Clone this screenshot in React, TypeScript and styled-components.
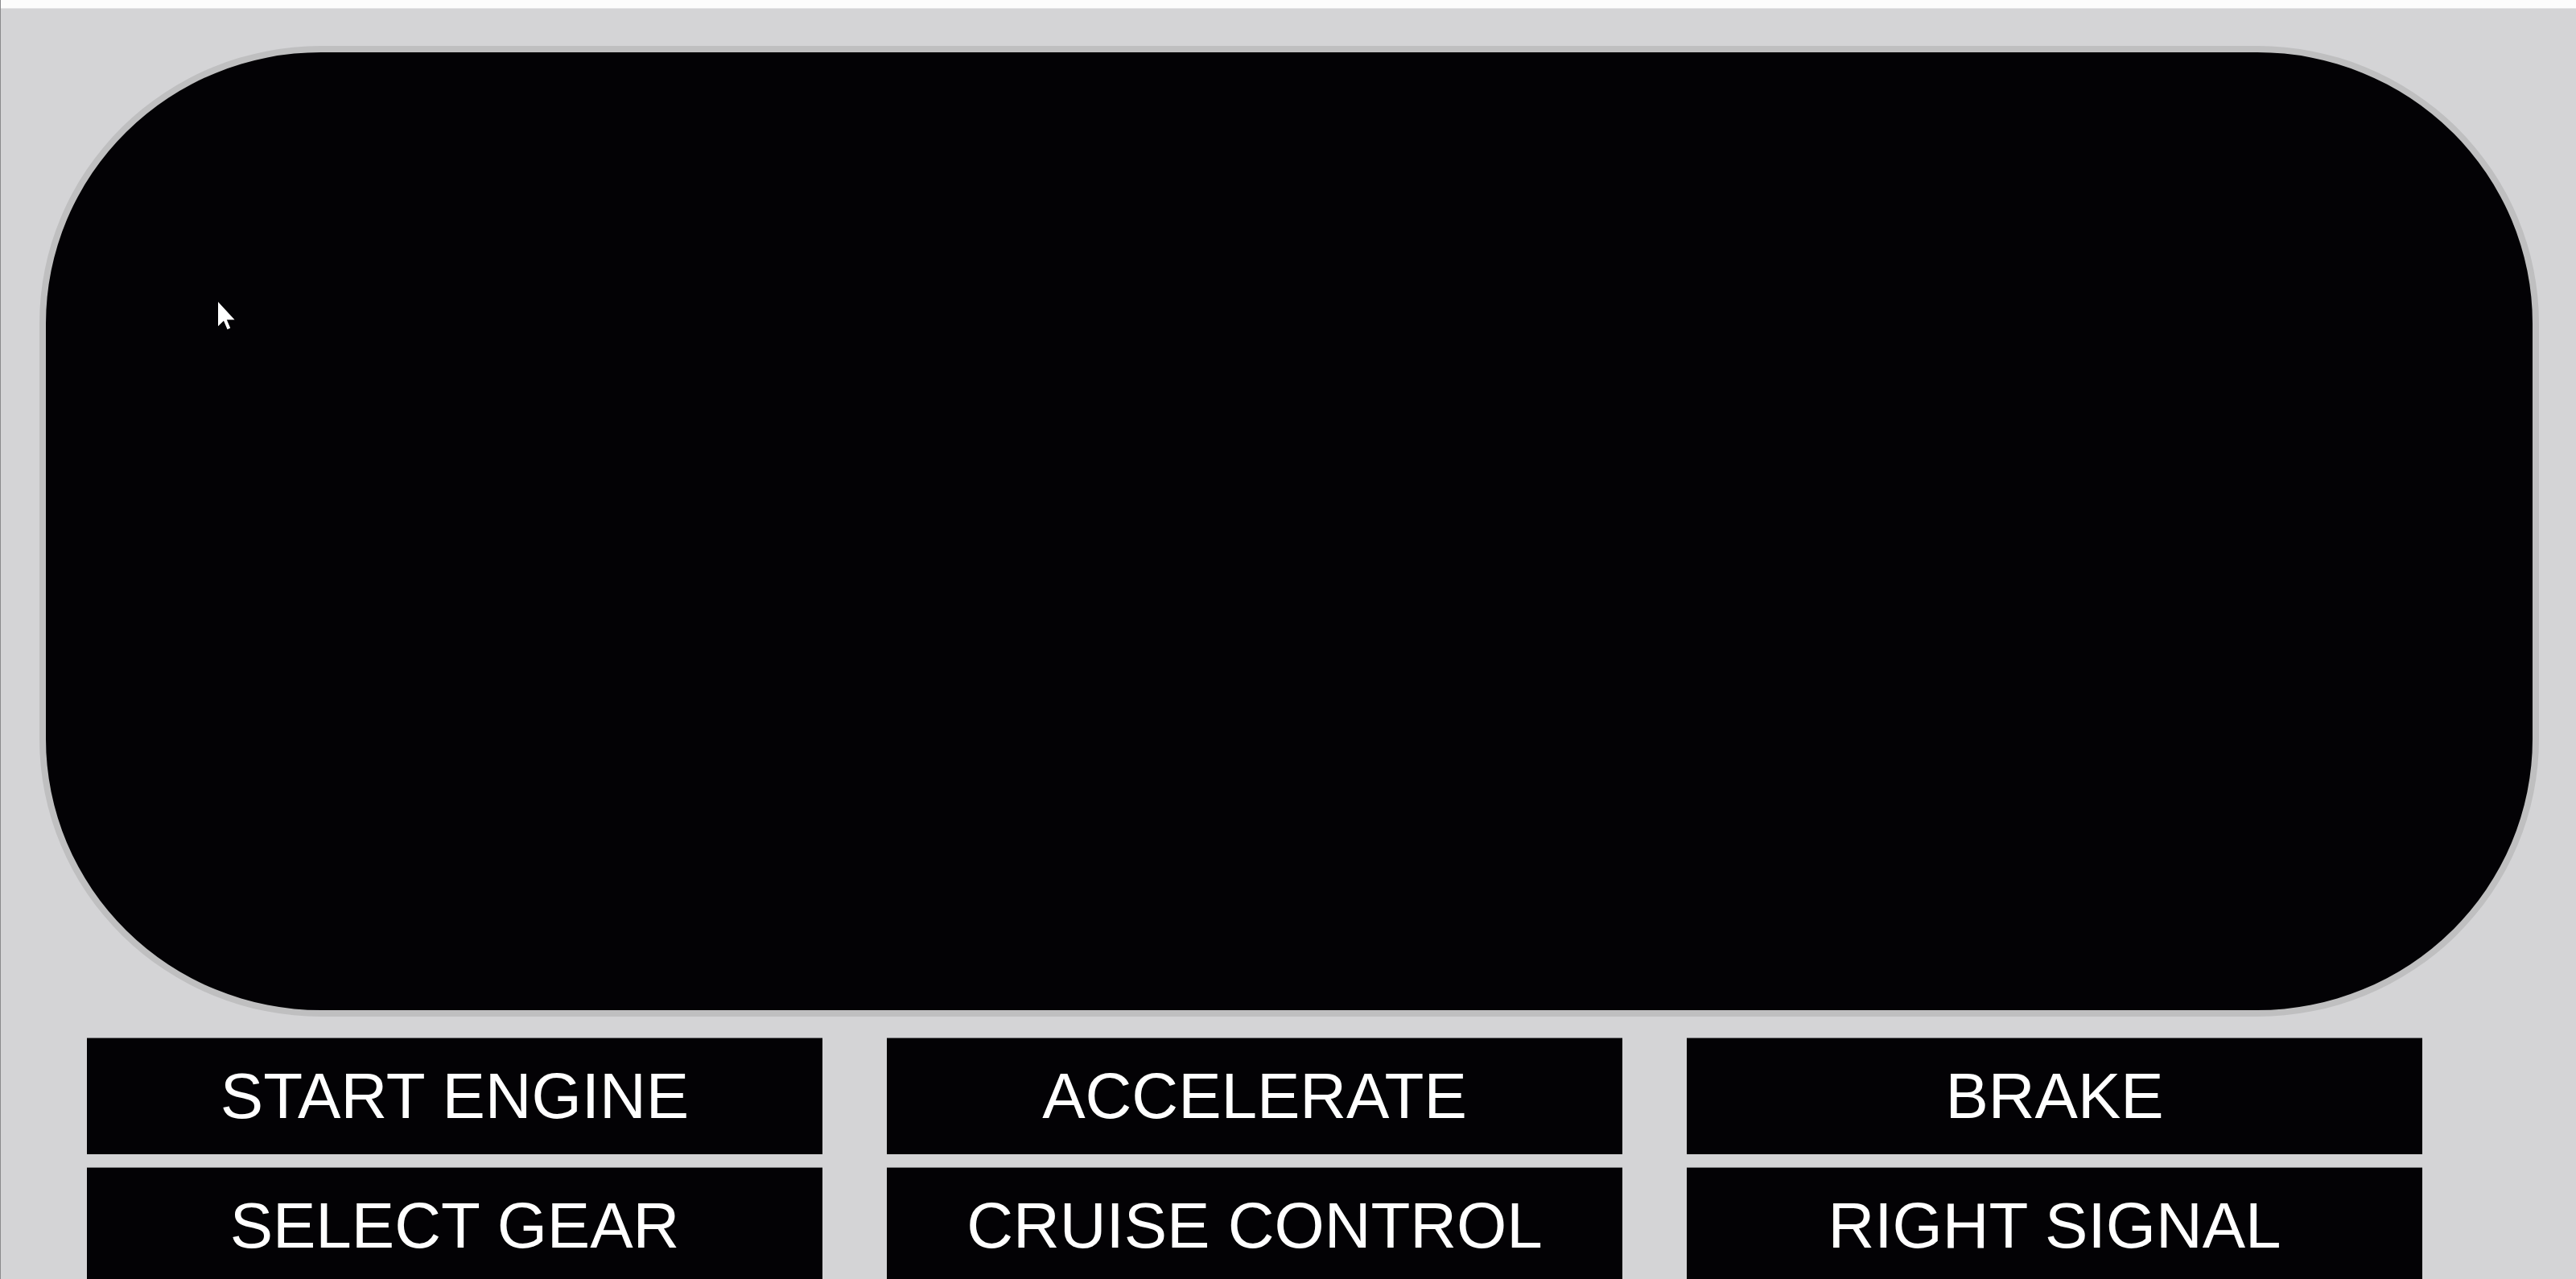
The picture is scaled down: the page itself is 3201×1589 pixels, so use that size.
import React from 'react'
import styled, { createGlobalStyle } from 'styled-components'

const GlobalStyle = createGlobalStyle`
  html, body {
    margin: 0;
    padding: 0;
    background: #d4d4d6;
    font-family: "Liberation Sans", Arial, sans-serif;
    overflow: hidden;
  }
`

const Page = styled.div`
  width: 3201px;
  height: 1589px;
  display: flex;
  flex-direction: column;
  background: #d4d4d6;
  border-left: 1px solid #8a8a8c;
  box-sizing: border-box;
  overflow: hidden;
`

const TopStrip = styled.div`
  height: 10px;
  flex-shrink: 0;
  background: #fcfcfc;
  border-bottom: 1px solid #e2e2e4;
`

const Screen = styled.div`
  position: relative;
  flex-shrink: 0;
  box-sizing: border-box;
  height: 1206px;
  margin: 46px 46px 0 48px;
  background: #030205;
  border: 8px solid #bfbfc0;
  border-radius: 350px / 345px;
`

const Cursor = styled.svg`
  position: absolute;
  left: 214px;
  top: 310px;
  width: 22px;
  height: 35px;
`

const Controls = styled.div`
  display: grid;
  grid-template-columns: repeat(3, 914px);
  grid-auto-rows: 145px;
  column-gap: 80px;
  row-gap: 16px;
  margin-top: 26px;
  padding-left: 107px;
`

const ControlButton = styled.button`
  display: flex;
  align-items: center;
  justify-content: center;
  margin: 0;
  padding: 0;
  border: none;
  border-top: 1px solid #7c7c7e;
  background: #030205;
  color: #ffffff;
  font-family: "Liberation Sans", Arial, sans-serif;
  font-size: 80px;
  font-weight: normal;
  text-transform: uppercase;
  cursor: pointer;
`

const controls = [
  'Start Engine',
  'Accelerate',
  'Brake',
  'Select Gear',
  'Cruise Control',
  'Right Signal',
]

export default function App() {
  return (
    <>
      <GlobalStyle />
      <Page>
        <TopStrip />
        <Screen>
          <Cursor viewBox="0 0 12 19">
            <path
              d="M0 0 V16.5 L3.8 12.8 L6.3 18.6 L8.3 17.7 L5.9 12.1 H11.2 Z"
              fill="#ffffff"
            />
          </Cursor>
        </Screen>
        <Controls>
          {controls.map(label => (
            <ControlButton key={label}>{label}</ControlButton>
          ))}
        </Controls>
      </Page>
    </>
  )
}
